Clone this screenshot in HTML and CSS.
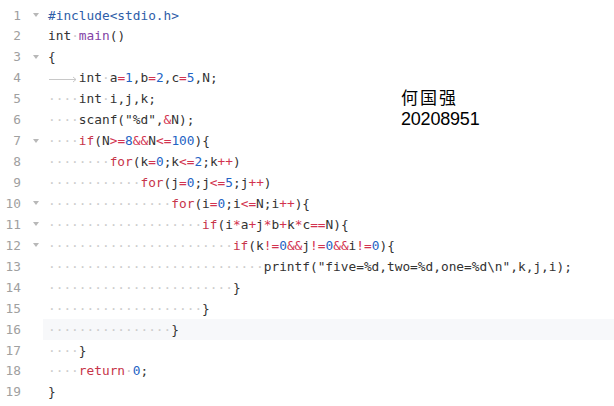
FILE: index.html
```html
<!DOCTYPE html>
<html>
<head>
<meta charset="utf-8">
<link rel="stylesheet" href="styles.css">
</head>
<body>
<div class="editor">
  <div class="row"><span class="ln">1</span><span class="fold"><svg width="6" height="4" viewBox="0 0 6 4"><path d="M0 0H6L3 4Z"/></svg></span><span class="code"><span class="p">#include&lt;stdio.h&gt;</span></span></div>
  <div class="row"><span class="ln">2</span><span class="fold"></span><span class="code">int<span class="w">·</span><span class="f">main</span>()</span></div>
  <div class="row"><span class="ln">3</span><span class="fold"><svg width="6" height="4" viewBox="0 0 6 4"><path d="M0 0H6L3 4Z"/></svg></span><span class="code">{</span></div>
  <div class="row"><span class="ln">4</span><span class="fold"></span><span class="code"><span class="tab"><svg width="31" height="8" viewBox="0 0 31 8"><path d="M1 4.5H28M25 2L28 4.5L25 7" fill="none" stroke="#c8c8c8" stroke-width="1"/></svg></span>int<span class="w">·</span>a<span class="o">=</span><span class="n">1</span>,b<span class="o">=</span><span class="n">2</span>,c<span class="o">=</span><span class="n">5</span>,N;</span></div>
  <div class="row"><span class="ln">5</span><span class="fold"></span><span class="code"><span class="w">····</span>int<span class="w">·</span>i,j,k;</span></div>
  <div class="row"><span class="ln">6</span><span class="fold"></span><span class="code"><span class="w">····</span>scanf("%d",<span class="o">&amp;</span>N);</span></div>
  <div class="row"><span class="ln">7</span><span class="fold"><svg width="6" height="4" viewBox="0 0 6 4"><path d="M0 0H6L3 4Z"/></svg></span><span class="code"><span class="w">····</span><span class="k">if</span>(N<span class="o">&gt;=</span><span class="n">8</span><span class="o">&amp;&amp;</span>N<span class="o">&lt;=</span><span class="n">100</span>){</span></div>
  <div class="row"><span class="ln">8</span><span class="fold"></span><span class="code"><span class="w">········</span><span class="k">for</span>(k<span class="o">=</span><span class="n">0</span>;k<span class="o">&lt;=</span><span class="n">2</span>;k<span class="o">++</span>)</span></div>
  <div class="row"><span class="ln">9</span><span class="fold"></span><span class="code"><span class="w">············</span><span class="k">for</span>(j<span class="o">=</span><span class="n">0</span>;j<span class="o">&lt;=</span><span class="n">5</span>;j<span class="o">++</span>)</span></div>
  <div class="row"><span class="ln">10</span><span class="fold"><svg width="6" height="4" viewBox="0 0 6 4"><path d="M0 0H6L3 4Z"/></svg></span><span class="code"><span class="w">················</span><span class="k">for</span>(i<span class="o">=</span><span class="n">0</span>;i<span class="o">&lt;=</span>N;i<span class="o">++</span>){</span></div>
  <div class="row"><span class="ln">11</span><span class="fold"><svg width="6" height="4" viewBox="0 0 6 4"><path d="M0 0H6L3 4Z"/></svg></span><span class="code"><span class="w">····················</span><span class="k">if</span>(i<span class="o">*</span>a<span class="o">+</span>j<span class="o">*</span>b<span class="o">+</span>k<span class="o">*</span>c<span class="o">==</span>N){</span></div>
  <div class="row"><span class="ln">12</span><span class="fold"><svg width="6" height="4" viewBox="0 0 6 4"><path d="M0 0H6L3 4Z"/></svg></span><span class="code"><span class="w">························</span><span class="k">if</span>(k<span class="o">!=</span><span class="n">0</span><span class="o">&amp;&amp;</span>j<span class="o">!=</span><span class="n">0</span><span class="o">&amp;&amp;</span>i<span class="o">!=</span><span class="n">0</span>){</span></div>
  <div class="row"><span class="ln">13</span><span class="fold"></span><span class="code"><span class="w">····························</span>printf("five=%d,two=%d,one=%d\n",k,j,i);</span></div>
  <div class="row"><span class="ln">14</span><span class="fold"></span><span class="code"><span class="w">························</span>}</span></div>
  <div class="row"><span class="ln">15</span><span class="fold"></span><span class="code"><span class="w">····················</span>}</span></div>
  <div class="row active"><span class="ln">16</span><span class="fold"></span><span class="code"><span class="w">················</span>}</span></div>
  <div class="row"><span class="ln">17</span><span class="fold"></span><span class="code"><span class="w">····</span>}</span></div>
  <div class="row"><span class="ln">18</span><span class="fold"></span><span class="code"><span class="w">····</span><span class="k">return</span><span class="w">·</span><span class="n">0</span>;</span></div>
  <div class="row"><span class="ln">19</span><span class="fold"></span><span class="code">}</span></div>
  <div class="note">
    <div class="name">何国强</div>
    <div class="id">20208951</div>
  </div>
</div>
</body>
</html>
```
FILE: styles.css
```css
html, body {
  margin: 0;
  padding: 0;
  background: #ffffff;
}
.editor {
  position: relative;
  width: 614px;
  height: 406px;
  padding-top: 4.5px;
  box-sizing: border-box;
  font-family: "DejaVu Sans Mono", "Liberation Mono", monospace;
  font-size: 12.8px;
  color: #333333;
  overflow: hidden;
}
.row {
  display: flex;
  height: 20.94px;
  line-height: 21px;
  white-space: pre;
}
.ln {
  width: 21px;
  text-align: right;
  color: #a0a0a0;
  flex: none;
}
.fold {
  width: 27px;
  flex: none;
  display: flex;
  align-items: center;
  padding-left: 12px;
  box-sizing: border-box;
}
.fold svg {
  fill: #b8b8b8;
}
.code {
  flex: 1;
}
.active .code {
  background: #f7f8fa;
  margin-left: -5px;
  padding-left: 5px;
}
.w {
  color: #cdcdcd;
}
.tab {
  display: inline-block;
  width: 4ch;
  vertical-align: middle;
  line-height: 0;
}
.tab svg {
  display: block;
}
.k { color: #c7354a; }
.o { color: #d2334f; }
.n { color: #2363c4; }
.f { color: #8343a6; }
.p { color: #2f5ea9; }
.note {
  position: absolute;
  left: 401px;
  top: 87px;
  color: #000000;
}
.name {
  font-family: "Noto Sans CJK SC", sans-serif;
  font-size: 17px;
  letter-spacing: 2px;
  line-height: 20px;
}
.id {
  margin-top: 2px;
  font-family: "Liberation Sans", Arial, sans-serif;
  font-size: 18px;
  letter-spacing: -0.2px;
  line-height: 20px;
}
```
